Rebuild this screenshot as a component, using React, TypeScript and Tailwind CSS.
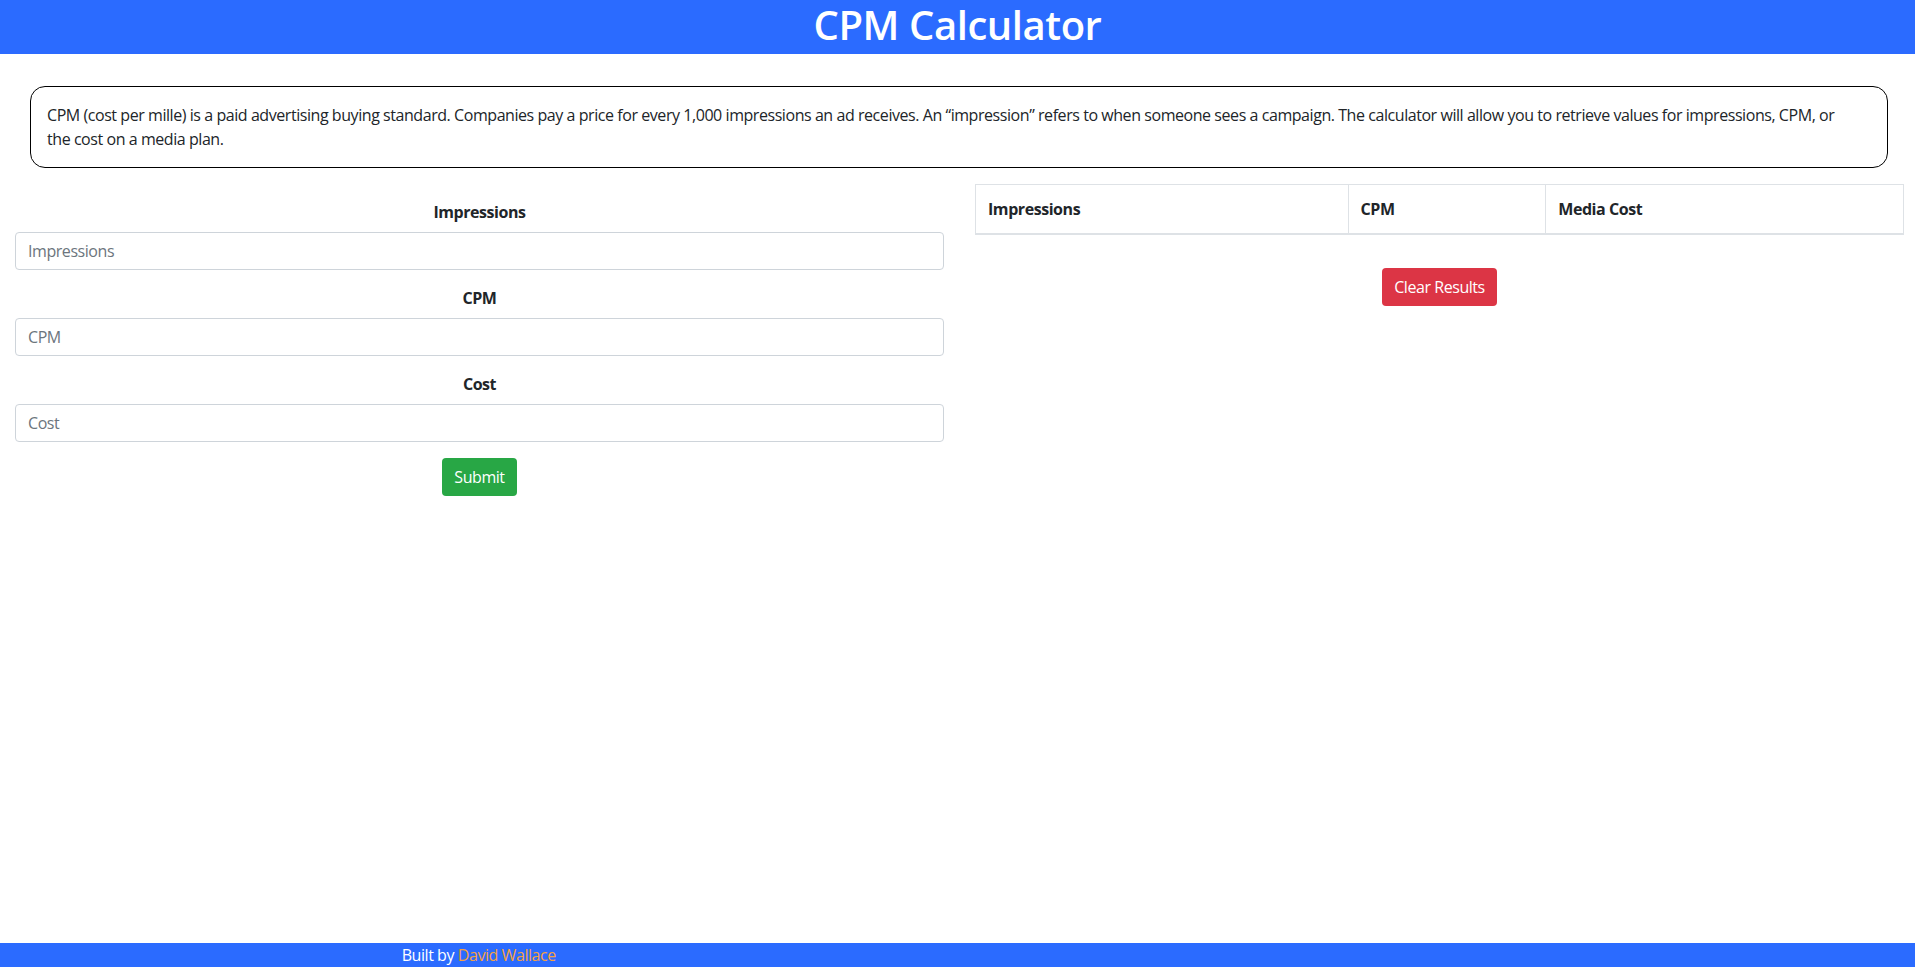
import { useState } from 'react';

type Row = { impressions: string; cpm: string; cost: string };

export default function App() {
  const [impressions, setImpressions] = useState('');
  const [cpm, setCpm] = useState('');
  const [cost, setCost] = useState('');
  const [rows, setRows] = useState<Row[]>([]);

  const handleSubmit = (e: React.FormEvent) => {
    e.preventDefault();
    const i = parseFloat(impressions);
    const c = parseFloat(cpm);
    const m = parseFloat(cost);
    let row: Row | null = null;
    if (!isNaN(i) && !isNaN(c)) row = { impressions: String(i), cpm: String(c), cost: ((i / 1000) * c).toFixed(2) };
    else if (!isNaN(i) && !isNaN(m)) row = { impressions: String(i), cpm: ((m / i) * 1000).toFixed(2), cost: String(m) };
    else if (!isNaN(c) && !isNaN(m)) row = { impressions: Math.round((m / c) * 1000).toString(), cpm: String(c), cost: String(m) };
    if (row) setRows((prev) => [...prev, row as Row]);
  };

  return (
    <div className="flex min-h-screen flex-col bg-white font-['Open_Sans','Noto_Sans',Roboto,sans-serif] tracking-[-0.0275em] text-[#212529]">
      <header className="flex h-[54px] items-center justify-center bg-[#2b6bff] pb-1">
        <h1 className="text-[40px] font-semibold leading-[48px] text-white">CPM Calculator</h1>
      </header>

      <main className="flex-1">
        <div className="ml-[30px] mt-[32px] w-[97%] rounded-[15px] border border-black py-4 pl-4 pr-[40px] text-base leading-6">
          CPM (cost per mille) is a paid advertising buying standard. Companies pay a price for every 1,000 impressions an ad
          receives. An “impression” refers to when someone sees a campaign. The calculator will allow you to retrieve values
          for impressions, CPM, or the cost on a media plan.
        </div>

        <div className="mt-4 grid grid-cols-2 gap-[31px] pl-[15px] pr-[11px]">
          <form onSubmit={handleSubmit} className="pt-4">
            <Field label="Impressions" value={impressions} onChange={setImpressions} />
            <Field label="CPM" value={cpm} onChange={setCpm} />
            <Field label="Cost" value={cost} onChange={setCost} />
            <div className="flex justify-center">
              <button type="submit" className="h-[38px] rounded bg-[#28a745] px-3 text-base leading-6 text-white">
                Submit
              </button>
            </div>
          </form>

          <div>
            <table className="w-full border-collapse border border-[#dee2e6] text-left">
              <thead>
                <tr>
                  <th className="w-[40.15%] border border-b-2 border-[#dee2e6] p-3 font-bold leading-6">Impressions</th>
                  <th className="w-[21.3%] border border-b-2 border-[#dee2e6] p-3 font-bold leading-6">CPM</th>
                  <th className="border border-b-2 border-[#dee2e6] p-3 font-bold leading-6">Media Cost</th>
                </tr>
              </thead>
              <tbody>
                {rows.map((r, idx) => (
                  <tr key={idx}>
                    <td className="border border-[#dee2e6] p-3">{r.impressions}</td>
                    <td className="border border-[#dee2e6] p-3">{r.cpm}</td>
                    <td className="border border-[#dee2e6] p-3">{r.cost}</td>
                  </tr>
                ))}
              </tbody>
            </table>
            <div className="mt-[33px] flex justify-center">
              <button
                type="button"
                onClick={() => setRows([])}
                className="h-[38px] rounded bg-[#dc3545] px-3 text-base leading-6 text-white"
              >
                Clear Results
              </button>
            </div>
          </div>
        </div>
      </main>

      <footer className="grid h-6 grid-cols-2 bg-[#2b6bff] leading-6">
        <div className="text-center text-white">
          Built by <span className="text-[#f5a142]">David Wallace</span>
        </div>
        <div />
      </footer>
    </div>
  );
}

function Field({ label, value, onChange }: { label: string; value: string; onChange: (v: string) => void }) {
  return (
    <div className="mb-4">
      <label className="mb-2 block text-center font-bold leading-6">{label}</label>
      <input
        type="text"
        value={value}
        placeholder={label}
        onChange={(e) => onChange(e.target.value)}
        className="block h-[38px] w-full rounded border border-[#ced4da] px-3 text-base tracking-[-0.0275em] text-[#495057] placeholder:text-[#6c757d]"
      />
    </div>
  );
}
